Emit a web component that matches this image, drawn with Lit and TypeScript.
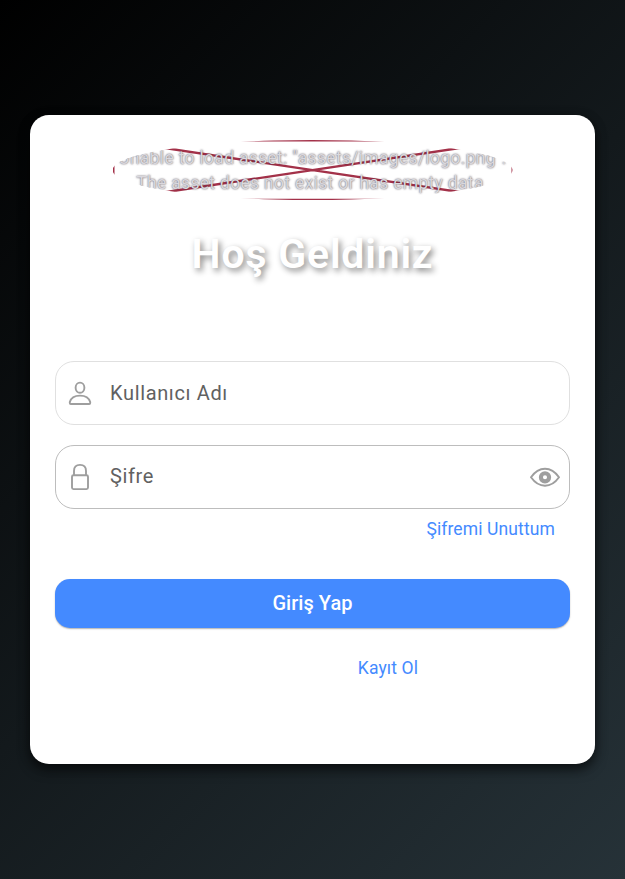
import { LitElement, html, css } from "lit";
import { customElement } from "lit/decorators.js";

@customElement("app-root")
export class AppRoot extends LitElement {
  static styles = css`
    :host {
      display: flex;
      align-items: center;
      justify-content: center;
      height: 100vh;
      box-sizing: border-box;
      padding: 0 30px;
      overflow: hidden;
      background: linear-gradient(135deg, #000 0%, #263238 100%);
      font-family: Roboto, sans-serif;
    }
    .card {
      flex: 1;
      height: 649px;
      box-sizing: border-box;
      padding: 25px;
      border-radius: 19px;
      background: #fff;
      box-shadow: 0 6px 12px rgba(0, 0, 0, 0.5), 0 2px 12px rgba(0, 0, 0, 0.3);
      display: flex;
      flex-direction: column;
    }
    .logo {
      display: grid;
      align-self: center;
      width: 400px;
      height: 60px;
      clip-path: ellipse(50% 50%);
    }
    .logo > * {
      grid-area: 1 / 1;
    }
    .message {
      align-self: center;
      padding-top: 2px;
      text-align: center;
      white-space: pre;
      font-size: 17.5px;
      line-height: 25px;
      letter-spacing: 0.31px;
      color: #dad8dd;
      text-shadow: 0 0 2px rgba(40, 30, 45, 0.85);
    }
    h1 {
      margin: 25px 0 1px;
      text-align: center;
      font-size: 41px;
      line-height: 58px;
      font-weight: 600;
      letter-spacing: 0.8px;
      color: #fff;
      text-shadow: 2.5px 2.5px 6px rgba(0, 0, 0, 0.48);
    }
    .field {
      display: flex;
      align-items: center;
      height: 64px;
      box-sizing: border-box;
      border: 1.25px solid #e0e0e0;
      border-radius: 19px;
      padding: 0 9px 0 10px;
      font-size: 20px;
      letter-spacing: 0.64px;
      color: #616161;
    }
    .user {
      margin-top: 77px;
    }
    .password {
      margin-top: 20px;
      border-color: #bdbdbd;
    }
    .field span {
      flex: 1;
      margin-left: 16px;
    }
    .password span {
      padding-bottom: 2px;
    }
    svg {
      display: block;
    }
    .icon {
      fill: none;
      stroke: #9e9e9e;
      stroke-width: 1.9;
    }
    .link {
      color: #448aff;
      font-size: 17.5px;
      line-height: 25px;
      letter-spacing: 0.12px;
    }
    .forgot {
      align-self: flex-end;
      margin: 8px 15px 0 0;
    }
    .submit {
      margin-top: 37px;
      height: 49px;
      border: 0;
      border-radius: 15px;
      padding: 0 0 2px;
      background: #448aff;
      color: #fff;
      font: 500 20px Roboto, sans-serif;
      letter-spacing: 0.05px;
      box-shadow: 0 1px 1.5px rgba(0, 0, 0, 0.3);
    }
    .register {
      align-self: center;
      margin: 28px 0 0 151px;
    }
  `;

  render() {
    return html`
      <main class="card">
        <div class="logo">
          <svg width="400" height="60" viewBox="0 0 400 60" fill="none" stroke="#a33149" stroke-width="2.4">
            <path d="M0.3 0.4H399.7V60H0.3ZL400 60M400 0L0 60" />
          </svg>
          <div class="message">Unable to load asset: "assets/images/logo.png".
The asset does not exist or has empty data.</div>
        </div>
        <h1>Hoş Geldiniz</h1>
        <div class="field user">
          <svg class="icon" width="28" height="30" viewBox="0 0 28 30">
            <ellipse cx="14" cy="9.7" rx="4.4" ry="5.1" />
            <path d="M3.8 25V24C5 19.8 9 17.6 14 17.6S23 19.8 24.2 24V25Q24.2 26 23.2 26H4.8Q3.8 26 3.8 25Z" />
          </svg>
          <span>Kullanıcı Adı</span>
        </div>
        <div class="field password">
          <svg class="icon" width="28" height="30" viewBox="0 0 28 30">
            <rect x="6" y="13.2" width="16" height="13.9" rx="1.5" />
            <path d="M8 13V8.9Q8 2.9 14 2.9T20 8.9V13" />
          </svg>
          <span>Şifre</span>
          <svg class="icon" width="30" height="30" viewBox="0 0 30 30">
            <path d="M1 15.3Q7 6.8 15 6.8T29 15.3Q23 23.8 15 23.8T1 15.3Z" />
            <circle cx="15" cy="15.3" r="4.1" stroke-width="4.1" />
          </svg>
        </div>
        <a class="link forgot">Şifremi Unuttum</a>
        <button class="submit">Giriş Yap</button>
        <a class="link register">Kayıt Ol</a>
      </main>
    `;
  }
}
